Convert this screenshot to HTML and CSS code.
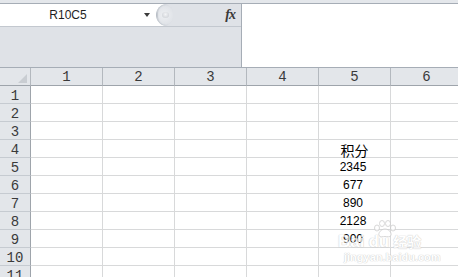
FILE: index.html
```html
<!DOCTYPE html>
<html>
<head>
<meta charset="utf-8">
<link rel="stylesheet" href="styles.css">
</head>
<body>
<div class="app">
  <div class="fbar">
    <div class="fbar-left">
      <div class="fbar-top">
        <div class="namebox"><span class="name">R10C5</span><span class="arrow"></span></div>
        <div class="fxpanel"><span class="grip"><span class="knob"></span></span><span class="fx">fx</span></div>
      </div>
      <div class="fbar-under"></div>
    </div>
    <div class="fbar-input"></div>
  </div>
  <div class="sheet">
    <div class="corner"><span class="tri"></span></div>
    <div class="ch">1</div><div class="ch">2</div><div class="ch">3</div><div class="ch">4</div><div class="ch">5</div><div class="ch">6</div>

    <div class="rh">1</div><div class="c"></div><div class="c"></div><div class="c"></div><div class="c"></div><div class="c"></div><div class="c"></div>
    <div class="rh">2</div><div class="c"></div><div class="c"></div><div class="c"></div><div class="c"></div><div class="c"></div><div class="c"></div>
    <div class="rh">3</div><div class="c"></div><div class="c"></div><div class="c"></div><div class="c"></div><div class="c"></div><div class="c"></div>
    <div class="rh">4</div><div class="c"></div><div class="c"></div><div class="c"></div><div class="c"></div><div class="c cjk">积分</div><div class="c"></div>
    <div class="rh">5</div><div class="c"></div><div class="c"></div><div class="c"></div><div class="c"></div><div class="c num">2345</div><div class="c"></div>
    <div class="rh">6</div><div class="c"></div><div class="c"></div><div class="c"></div><div class="c"></div><div class="c num">677</div><div class="c"></div>
    <div class="rh">7</div><div class="c"></div><div class="c"></div><div class="c"></div><div class="c"></div><div class="c num">890</div><div class="c"></div>
    <div class="rh">8</div><div class="c"></div><div class="c"></div><div class="c"></div><div class="c"></div><div class="c num">2128</div><div class="c"></div>
    <div class="rh">9</div><div class="c"></div><div class="c"></div><div class="c"></div><div class="c"></div><div class="c num">900</div><div class="c"></div>
    <div class="rh">10</div><div class="c"></div><div class="c"></div><div class="c"></div><div class="c"></div><div class="c"></div><div class="c"></div>
    <div class="rh">11</div><div class="c"></div><div class="c"></div><div class="c"></div><div class="c"></div><div class="c"></div><div class="c"></div>
  </div>
  <div class="watermark">
    <svg class="paw" width="26" height="18" viewBox="0 0 26 18">
      <g fill="#ffffff" stroke="#c8c8c8" stroke-width="1">
        <ellipse cx="5" cy="8" rx="2.5" ry="3"/>
        <ellipse cx="10" cy="3.5" rx="2.5" ry="3"/>
        <ellipse cx="16" cy="3.5" rx="2.5" ry="3"/>
        <ellipse cx="21" cy="8" rx="2.5" ry="3"/>
        <path d="M13 9 C9 9 6 13 7 15.5 C8 17.5 11 16.5 13 16.5 C15 16.5 18 17.5 19 15.5 C20 13 17 9 13 9 Z"/>
      </g>
    </svg>
    <div class="wm-line"><span class="wm-bai">Bai</span><span class="wm-du">du</span><span class="wm-cn">经验</span></div>
    <div class="wm-url">jingyan.baidu.com</div>
  </div>
</div>
</body>
</html>
```

FILE: styles.css
```css
html, body {
  margin: 0;
  padding: 0;
}
body {
  width: 458px;
  height: 277px;
  overflow: hidden;
  background: #ffffff;
}
.app {
  position: relative;
  width: 458px;
  height: 277px;
  overflow: hidden;
  padding-top: 3px;
  box-sizing: border-box;
  background: #e4e7eb;
}
.fbar {
  display: flex;
  height: 65px;
  box-sizing: border-box;
  border-top: 1px solid #a6adb6;
  border-bottom: 1px solid #a6adb6;
}
.fbar-left {
  width: 242px;
  box-sizing: border-box;
  border-right: 1px solid #a6adb6;
  display: flex;
  flex-direction: column;
  background: #dfe2e7;
}
.fbar-top {
  display: flex;
  height: 23px;
  box-sizing: border-box;
  border-bottom: 1px solid #c3c8cf;
  background: #ffffff;
}
.namebox {
  flex: 1;
  display: flex;
  align-items: center;
  background: #ffffff;
}
.name {
  width: 136px;
  text-align: center;
  font-family: "Liberation Sans", Arial, sans-serif;
  font-size: 12px;
  color: #1e1e1e;
}
.arrow {
  margin-left: 8px;
  width: 0;
  height: 0;
  border-left: 3.5px solid transparent;
  border-right: 3.5px solid transparent;
  border-top: 4px solid #3c3c3c;
}
.fxpanel {
  width: 84px;
  display: flex;
  align-items: center;
  background: #dfe2e7;
  border-radius: 11px 0 0 11px;
  box-shadow: -1px 0 0 #b9bfc7;
}
.grip {
  width: 16px;
  height: 20px;
  border-radius: 10px;
  display: flex;
  align-items: center;
  justify-content: center;
  background: radial-gradient(circle at 45% 50%, #eef0f3 0%, #dfe2e7 75%);
  box-shadow: inset 1px 0 1px #c2c7ce;
}
.knob {
  width: 7px;
  height: 6px;
  border-radius: 50%;
  background: radial-gradient(circle at 50% 40%, #f4f5f7, #c6cad0);
}
.fx {
  margin-left: auto;
  margin-right: 6px;
  font-family: "Liberation Serif", "Times New Roman", serif;
  font-style: italic;
  font-weight: bold;
  font-size: 14px;
  color: #3a3a3a;
  letter-spacing: -1px;
}
.fbar-under {
  flex: 1;
  background: #dfe2e7;
}
.fbar-input {
  flex: 1;
  background: #ffffff;
}
.sheet {
  display: grid;
  grid-template-columns: 31px repeat(6, 72px);
  grid-auto-rows: 18px;
  background: #ffffff;
}
.corner, .ch, .rh {
  background: #e3e6ea;
  box-sizing: border-box;
  font-family: "Liberation Mono", "DejaVu Sans Mono", monospace;
  font-size: 14px;
  color: #3a3a3a;
  display: flex;
  align-items: center;
  justify-content: center;
}
.corner {
  position: relative;
  border-right: 1px solid #b3b8be;
  border-bottom: 1px solid #9ea4ab;
}
.tri {
  position: absolute;
  right: 3px;
  bottom: 2px;
  width: 0;
  height: 0;
  border-left: 9px solid transparent;
  border-bottom: 9px solid #c9cdd2;
}
.ch {
  border-right: 1px solid #b3b8be;
  border-bottom: 1px solid #9ea4ab;
  padding-top: 1px;
}
.rh {
  border-right: 1px solid #9ea4ab;
  border-bottom: 1px solid #c6cbd1;
  padding-top: 2px;
}
.c {
  box-sizing: border-box;
  border-right: 1px solid #d8d9da;
  border-bottom: 1px solid #d8d9da;
  display: flex;
  align-items: center;
  justify-content: center;
  color: #000000;
}
.num {
  font-family: "Liberation Sans", Arial, sans-serif;
  font-size: 12px;
  padding-right: 3px;
  padding-top: 1px;
}
.cjk {
  font-family: "Noto Sans CJK SC", sans-serif;
  font-size: 14px;
  padding-top: 3px;
}
.watermark {
  position: absolute;
  left: 338px;
  top: 220px;
  width: 100px;
  color: #ffffff;
  text-shadow: 0 0 1px #b8b8b8, 0 0 1px #b8b8b8;
  font-family: "Liberation Sans", Arial, sans-serif;
  opacity: 0.7;
}
.paw {
  display: block;
  margin-left: 34px;
  margin-bottom: -6px;
}
.wm-line {
  display: flex;
  align-items: baseline;
  font-weight: bold;
  font-size: 17px;
  line-height: 18px;
}
.wm-du {
  margin-left: 4px;
}
.wm-cn {
  margin-left: 4px;
  font-family: "Noto Sans CJK SC", sans-serif;
  font-size: 14px;
}
.wm-url {
  margin-left: 6px;
  font-size: 11px;
  line-height: 13px;
  font-weight: bold;
}
```
